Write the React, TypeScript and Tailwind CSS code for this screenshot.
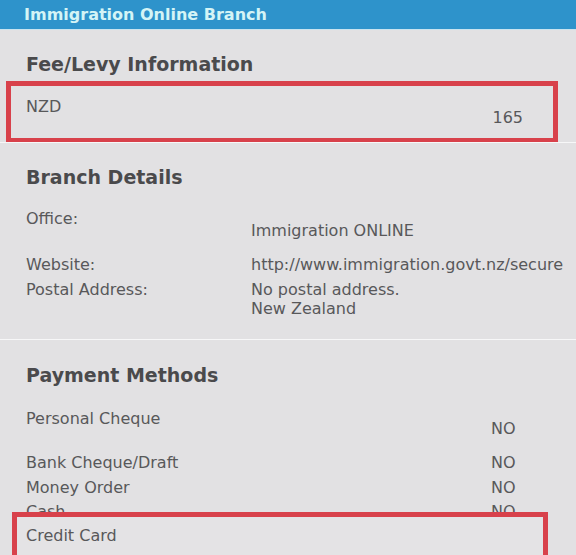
import React from "react";

const font = { fontFamily: '"DejaVu Sans", Verdana, sans-serif' };

function Row({ h, label, value, vpt = 0, lines }: { h: number; label: string; value?: string; vpt?: number; lines?: string[] }) {
  return (
    <div className="flex" style={{ height: h }}>
      <div className="w-[251px] pl-[26px] leading-[19px]">{label}</div>
      <div className="leading-[19px] whitespace-nowrap" style={{ paddingTop: vpt }}>
        {lines ? lines.map((l) => <div key={l}>{l}</div>) : value}
      </div>
    </div>
  );
}

function PayRow({ h, label, vpt = 0 }: { h: number; label: string; vpt?: number }) {
  return (
    <div className="flex" style={{ height: h }}>
      <div className="w-[491px] pl-[26px] leading-[19px]">{label}</div>
      <div className="leading-[19px]" style={{ paddingTop: vpt }}>NO</div>
    </div>
  );
}

export default function App() {
  return (
    <div className="w-[576px] h-[555px] overflow-hidden bg-[#e2e1e3] text-[#58585a] text-[16px]" style={font}>
      <div className="h-[30px] bg-[#2e93cb] border-b border-[#c9e3ef] pl-[24px] flex items-center">
        <span className="text-[16px] font-bold text-[#d4f4f6]">Immigration Online Branch</span>
      </div>
      <div className="pt-[22px] pl-[26px] h-[51px]">
        <div className="text-[19px] font-bold leading-[24px] text-[#4a4a4c]">Fee/Levy Information</div>
      </div>
      <div className="ml-[6px] w-[552px] h-[62px] border-[5px] border-[#d8414b] flex justify-between pl-[15px] pr-[30px]">
        <div className="pt-[11px] leading-[19px]">NZD</div>
        <div className="pt-[22px] leading-[19px]">165</div>
      </div>
      <div className="h-[1px] bg-[#f7f7f8] -mt-[1px]" />
      <div className="pt-[22px] pl-[26px] h-[66px]">
        <div className="text-[19px] font-bold leading-[24px] text-[#4a4a4c]">Branch Details</div>
      </div>
      <Row h={46} label="Office:" value="Immigration ONLINE" vpt={12} />
      <Row h={25} label="Website:" value="http://www.immigration.govt.nz/secure" />
      <Row h={59} label="Postal Address:" lines={["No postal address.", "New Zealand"]} />
      <div className="h-[1px] bg-[#f7f7f8]" />
      <div className="pt-[23px] pl-[26px] h-[69px]">
        <div className="text-[19px] font-bold leading-[24px] text-[#4a4a4c]">Payment Methods</div>
      </div>
      <PayRow h={44} label="Personal Cheque" vpt={10} />
      <PayRow h={25} label="Bank Cheque/Draft" />
      <PayRow h={24} label="Money Order" />
      <div className="flex h-[10px]">
        <div className="w-[491px] pl-[26px] leading-[19px]">Cash</div>
        <div className="leading-[19px]">NO</div>
      </div>
      <div className="relative ml-[12px] w-[536px] h-[60px] border-[5px] border-[#d8414b] bg-[#e4e3e5] pl-[9px] pt-[9px]">
        <div className="leading-[19px]">Credit Card</div>
      </div>
    </div>
  );
}
